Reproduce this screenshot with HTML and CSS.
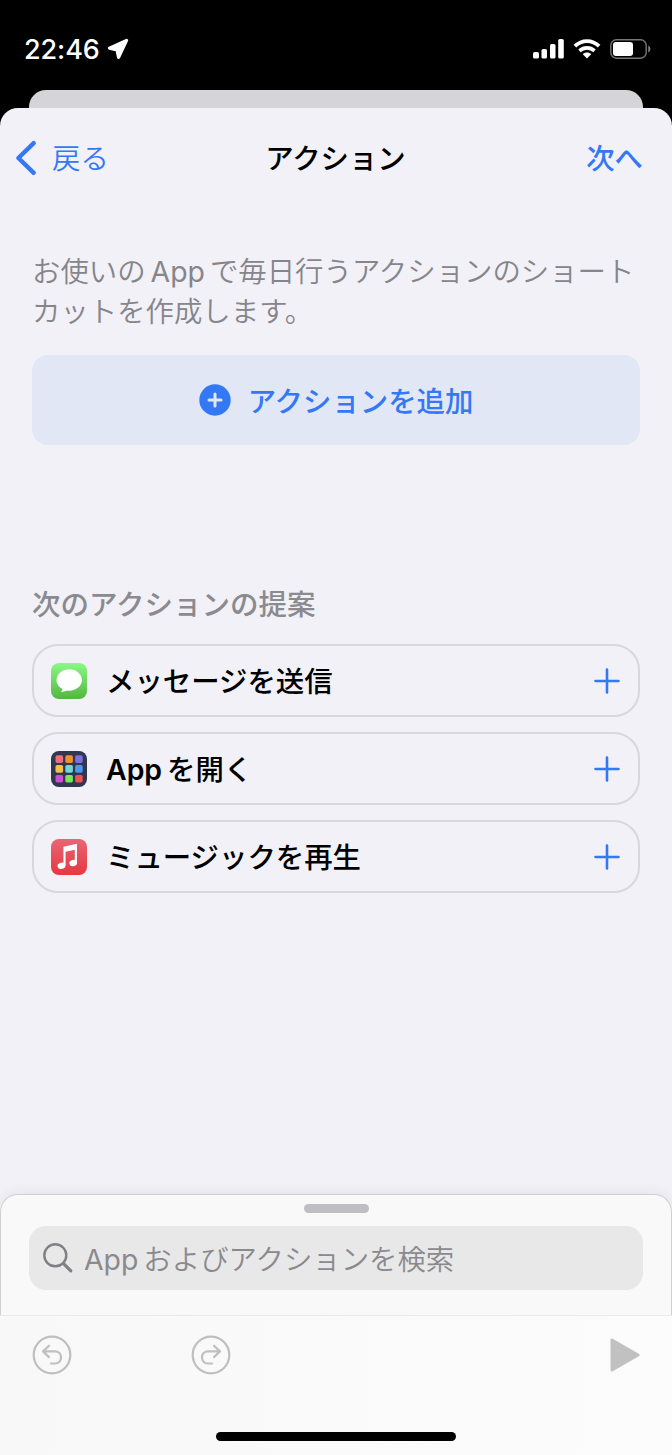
FILE: index.html
```html
<!DOCTYPE html>
<html lang="ja">
<head>
    <meta charset="UTF-8">
    <meta name="viewport" content="width=device-width, initial-scale=1.0">
    <title>アクション</title>
    <link rel="stylesheet" href="styles.css">
</head>
<body>

    <div class="status-bar">
        <div class="status-left">
            <span class="time">22:46</span>
            <svg class="location" width="22" height="22" viewBox="0 0 22 22">
                <path d="M19.6 2.4 L2.4 10.2 L10 11.9 L11.6 19.4 Z" fill="#fff" stroke="#fff" stroke-width="3.2" stroke-linejoin="round"/>
            </svg>
        </div>
        <div class="status-right">
            <svg width="31" height="20" viewBox="0 0 31 20" fill="#fff">
                <rect x="0" y="13" width="6" height="6.5" rx="1.6"/>
                <rect x="8.5" y="10" width="5.5" height="9.5" rx="1.6"/>
                <rect x="17" y="5" width="5.5" height="14.5" rx="1.6"/>
                <rect x="25.2" y="0" width="5.6" height="19.5" rx="1.6"/>
            </svg>
            <svg width="28" height="20" viewBox="0 0 28 20">
                <path d="M1.9 7.2 C8.8 0.3 19.2 0.3 26.1 7.2" fill="none" stroke="#fff" stroke-width="3.8"/>
                <path d="M6.5 11.9 C10.8 7.9 17.2 7.9 21.5 11.9" fill="none" stroke="#fff" stroke-width="3.6"/>
                <path d="M9.6 15.1 C12.2 12.9 15.8 12.9 18.4 15.1 L14 19.6 Z" fill="#fff"/>
            </svg>
            <svg width="41" height="20" viewBox="0 0 41 20">
                <rect x="0.8" y="0.8" width="35.4" height="18.4" rx="5.5" fill="none" stroke="#77777a" stroke-width="1.4"/>
                <rect x="3" y="3" width="20" height="14" rx="3" fill="#fff"/>
                <path d="M38.2 6.5 C41.2 7.8 41.2 12.2 38.2 13.5 Z" fill="#77777a"/>
            </svg>
        </div>
    </div>

    <div class="back-sheet"></div>

    <div class="sheet">
        <div class="nav">
            <a class="back">
                <svg width="22" height="36" viewBox="0 0 22 36">
                    <path d="M18.7 3.2 L3.4 18 L18.7 32.8" fill="none" stroke="#3478f6" stroke-width="4.4" stroke-linecap="round" stroke-linejoin="round"/>
                </svg>
                <span>戻る</span>
            </a>
            <h1>アクション</h1>
            <a class="next">次へ</a>
        </div>

        <div class="content">
            <p class="intro">お使いの<span class="latin">App</span>で毎日行うアクションのショート<br>カットを作成します。</p>

            <div class="add-button">
                <svg width="32" height="32" viewBox="0 0 32 32">
                    <circle cx="16" cy="16" r="15.7" fill="#3478f6"/>
                    <path d="M16 10 V22 M10 16 H22" stroke="#e1e7f5" stroke-width="3" stroke-linecap="round"/>
                </svg>
                <span>アクションを追加</span>
            </div>

            <h2>次のアクションの提案</h2>

            <div class="card">
                <svg class="app-icon" viewBox="0 0 36 36">
                    <defs>
                        <linearGradient id="green" x1="0" y1="0" x2="0" y2="1">
                            <stop offset="0" stop-color="#8af986"/>
                            <stop offset="1" stop-color="#54b63f"/>
                        </linearGradient>
                    </defs>
                    <rect width="36" height="36" rx="8" fill="url(#green)"/>
                    <ellipse cx="18.2" cy="17" rx="12.7" ry="10.7" fill="#fff"/>
                    <path d="M11.5 24 C12 26.5 11 28 9.7 29 C13 29 15.5 28 17 26.5 Z" fill="#fff"/>
                </svg>
                <span class="card-title">メッセージを送信</span>
                <svg class="plus" viewBox="0 0 26 26"><path d="M13 1.5 V24.5 M1.5 13 H24.5"/></svg>
            </div>

            <div class="card">
                <svg class="app-icon" viewBox="0 0 36 36">
                    <rect width="36" height="36" rx="8" fill="#30374f"/>
                    <rect x="4.5" y="4.3" width="7.6" height="7.6" rx="1.7" fill="#ed6e78"/>
                    <rect x="14.3" y="4.3" width="7.6" height="7.6" rx="1.7" fill="#f09035"/>
                    <rect x="24.1" y="4.3" width="7.6" height="7.6" rx="1.7" fill="#7d70e3"/>
                    <rect x="4.5" y="14.1" width="7.6" height="7.6" rx="1.7" fill="#f5c244"/>
                    <rect x="14.3" y="14.1" width="7.6" height="7.6" rx="1.7" fill="#72d5dc"/>
                    <rect x="24.1" y="14.1" width="7.6" height="7.6" rx="1.7" fill="#4797f6"/>
                    <rect x="4.5" y="23.9" width="7.6" height="7.6" rx="1.7" fill="#c84fd6"/>
                    <rect x="14.3" y="23.9" width="7.6" height="7.6" rx="1.7" fill="#77e65c"/>
                    <rect x="24.1" y="23.9" width="7.6" height="7.6" rx="1.7" fill="#ed5257"/>
                </svg>
                <span class="card-title"><span class="latin">App</span>を開く</span>
                <svg class="plus" viewBox="0 0 26 26"><path d="M13 1.5 V24.5 M1.5 13 H24.5"/></svg>
            </div>

            <div class="card">
                <svg class="app-icon" viewBox="0 0 36 36">
                    <defs>
                        <linearGradient id="red" x1="0" y1="0" x2="0" y2="1">
                            <stop offset="0" stop-color="#e96676"/>
                            <stop offset="1" stop-color="#e5383f"/>
                        </linearGradient>
                    </defs>
                    <rect width="36" height="36" rx="8" fill="url(#red)"/>
                    <path d="M12.4 7.8 L26 4.8 V23.5 H23.8 V10.8 L14.6 12.8 V26.5 H12.4 Z" fill="#fff"/>
                    <ellipse cx="10.5" cy="26.7" rx="4" ry="3.1" fill="#fff" transform="rotate(-15 10.5 26.7)"/>
                    <ellipse cx="22.2" cy="23.9" rx="3.9" ry="3.1" fill="#fff" transform="rotate(-15 22.2 23.9)"/>
                </svg>
                <span class="card-title">ミュージックを再生</span>
                <svg class="plus" viewBox="0 0 26 26"><path d="M13 1.5 V24.5 M1.5 13 H24.5"/></svg>
            </div>
        </div>

        <div class="drawer">
            <div class="grabber"></div>
            <div class="search">
                <svg width="30" height="30" viewBox="0 0 30 30" fill="none" stroke="#7f7f84" stroke-linecap="round">
                    <circle cx="12.3" cy="12.3" r="11" stroke-width="2.4"/>
                    <path d="M20.6 20.6 L27.8 27.8" stroke-width="3.2"/>
                </svg>
                <span class="placeholder"><span class="latin">App</span>およびアクションを検索</span>
            </div>
        </div>

        <div class="toolbar">
            <div class="tools">
                <svg class="undo" viewBox="0 0 40 40">
                    <circle cx="20" cy="20" r="18.3"/>
                    <path d="M17 10.7 L11 16.4 L17 22.1 M11 16.4 H23 C31 16.4 31 28.5 23 28.5 H19"/>
                </svg>
                <svg class="redo" viewBox="0 0 40 40">
                    <circle cx="20" cy="20" r="18.3"/>
                    <path d="M23 10.7 L29 16.4 L23 22.1 M29 16.4 H17 C9 16.4 9 28.5 17 28.5 H21"/>
                </svg>
                <svg class="play" viewBox="0 0 30 34">
                    <path d="M2 2 V32 L28 17 Z"/>
                </svg>
            </div>
            <div class="home-indicator"></div>
        </div>
    </div>

</body>
</html>
```
FILE: styles.css
```css
* {
    box-sizing: border-box;
}
body {
    margin: 0;
    height: 1455px;
    display: flex;
    flex-direction: column;
    background-color: #000;
    font-family: 'Noto Sans CJK JP', sans-serif;
    font-size: 28.4px;
    overflow: hidden;
}
svg {
    display: block;
    flex-shrink: 0;
}
.latin {
    font-family: Inter, sans-serif;
    line-height: 1;
}

/* status bar */
.status-bar {
    height: 90px;
    padding: 8px 21px 0 24px;
    display: flex;
    align-items: center;
    justify-content: space-between;
}
.status-left {
    display: flex;
    align-items: center;
    gap: 7px;
}
.time {
    padding-top: 1px;
    color: #fff;
    font-family: Inter, sans-serif;
    font-size: 27px;
    font-weight: 550;
    line-height: 32px;
    letter-spacing: -0.1px;
}
.status-right {
    display: flex;
    align-items: center;
    gap: 9px;
}

/* sheets */
.back-sheet {
    height: 18px;
    margin: 0 29px;
    background-color: #d5d4d9;
    border-radius: 17px 17px 0 0;
}
.sheet {
    flex: 1;
    display: flex;
    flex-direction: column;
    background-color: #f2f1f7;
    border-radius: 18px 18px 0 0;
}
.nav {
    height: 100px;
    padding: 0 29px 0 15px;
    display: grid;
    grid-template-columns: 1fr auto 1fr;
    align-items: center;
    line-height: 38px;
}
.nav h1 {
    margin: 0 0 2px 13px;
    font-size: 28.4px;
    font-weight: 500;
}
.back {
    display: flex;
    align-items: center;
    gap: 15px;
    color: #3478f6;
    font-weight: 350;
}
.back span {
    padding-bottom: 2px;
}
.next {
    justify-self: end;
    padding-bottom: 2px;
    color: #3478f6;
    font-weight: 500;
}

/* content */
.content {
    flex: 1;
    padding: 42px 32px 0;
}
.intro {
    margin: 0 0 25px;
    color: #85858a;
    font-weight: 350;
    line-height: 40px;
    white-space: nowrap;
}
.intro .latin {
    margin: 0 5px;
    font-weight: 400;
}
.add-button {
    height: 90px;
    display: flex;
    align-items: center;
    justify-content: center;
    gap: 17px;
    background-color: #e1e7f5;
    border-radius: 16px;
    color: #3478f6;
    font-weight: 500;
}
.add-button span {
    padding-bottom: 2px;
}
h2 {
    margin: 138px 0 21px;
    color: #8a8a8f;
    font-size: 28.5px;
    font-weight: 500;
    line-height: 40px;
}
.card {
    height: 73px;
    margin-bottom: 15px;
    padding: 0 18px 0 17px;
    display: flex;
    align-items: center;
    border: 2px solid #d8d7dc;
    border-radius: 26px;
}
.app-icon {
    width: 36px;
    height: 36px;
}
.card-title {
    flex: 1;
    margin-left: 19px;
    padding-bottom: 2px;
    font-weight: 500;
    line-height: 38px;
}
.card-title .latin {
    margin-right: 5px;
    font-weight: 600;
}
.plus {
    width: 26px;
    height: 26px;
    fill: none;
    stroke: #3478f6;
    stroke-width: 2.6;
    stroke-linecap: round;
}

/* search drawer */
.drawer {
    height: 121px;
    padding: 9px 28px 0;
    background-color: #f9f9f9;
    border: 1px solid #d0d0d4;
    border-bottom: none;
    border-radius: 18px 18px 0 0;
    box-shadow: 0 -2px 12px rgba(0, 0, 0, 0.06);
}
.grabber {
    width: 65px;
    height: 9px;
    margin: 0 auto 13px;
    background-color: #bfbfc1;
    border-radius: 5px;
}
.search {
    height: 64px;
    padding-left: 14px;
    display: flex;
    align-items: center;
    gap: 11px;
    background-color: #e8e8e8;
    border-radius: 17px;
}
.placeholder {
    color: #8a8a8e;
    font-weight: 350;
    line-height: 40px;
}
.placeholder .latin {
    margin-right: 5px;
    font-weight: 400;
}

/* bottom toolbar */
.toolbar {
    height: 140px;
    border-top: 1px solid #e9e9ea;
    background: linear-gradient(to right, #f8f8f9, #fcfcfc);
}
.tools {
    height: 78px;
    padding: 0 32px 0 31.5px;
    display: flex;
    align-items: center;
}
.undo,
.redo {
    width: 40px;
    height: 40px;
    fill: none;
    stroke: #bfbfbf;
    stroke-width: 2.2;
    stroke-linecap: round;
    stroke-linejoin: round;
}
.redo {
    margin-left: 119.5px;
}
.play {
    width: 30px;
    height: 34px;
    margin-left: auto;
    fill: #c1c1c1;
    stroke: #c1c1c1;
    stroke-width: 3;
    stroke-linejoin: round;
}
.home-indicator {
    width: 240px;
    height: 9px;
    margin: 38px auto 0;
    background-color: #000;
    border-radius: 5px;
}
```
